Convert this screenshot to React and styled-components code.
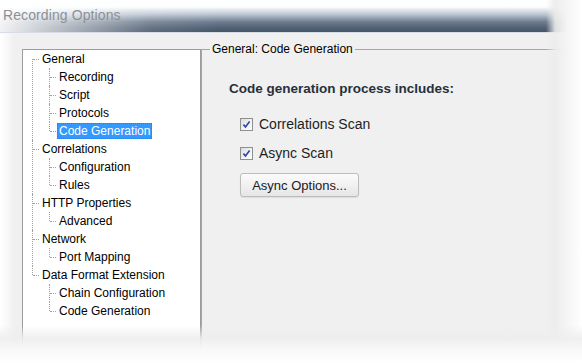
import React from 'react';
import styled, { createGlobalStyle } from 'styled-components';

const GlobalStyle = createGlobalStyle`
  html, body {
    margin: 0;
    padding: 0;
    background: #ffffff;
  }
  body {
    font-family: "Liberation Sans", Arial, sans-serif;
  }
`;

export const Frame = styled.div`
  position: relative;
  width: 582px;
  height: 363px;
  overflow: hidden;
  background: #ffffff;
`;

export const Window = styled.div`
  display: flex;
  flex-direction: column;
  width: 100%;
  height: 100%;
  background-color: #f0f0f0;
`;

export const TitleBar = styled.div`
  position: relative;
  height: 32px;
  flex: none;
  display: flex;
  align-items: center;
  padding-left: 3px;
  border-bottom: 1px solid #d8dde3;
  background: linear-gradient(
    to bottom,
    #ffffff 0%,
    #fbfcfd 22%,
    #bcc6d1 45%,
    #6e7d90 68%,
    #536276 86%,
    #475569 100%
  );

  &::before {
    content: '';
    position: absolute;
    inset: 0;
    background: linear-gradient(
      to right,
      rgba(255, 255, 255, 0.92) 0,
      rgba(255, 255, 255, 0.6) 60px,
      rgba(255, 255, 255, 0.12) 150px,
      rgba(255, 255, 255, 0) 220px
    );
  }
`;

export const Title = styled.span`
  position: relative;
  margin-top: -2px;
  font-size: 14px;
  color: #8c9096;
  letter-spacing: 0.1px;
`;

export const Body = styled.div`
  flex: 1;
  display: flex;
  align-items: flex-start;
  padding: 16px 0 0 22px;
`;

export const TreePanel = styled.div`
  flex: none;
  width: 179px;
  height: 303px;
  background: #ffffff;
  border: 1px solid #9c9c9c;
  padding: 0 0 0 9px;
  box-sizing: border-box;
`;

export const TreeList = styled.ul`
  list-style: none;
  margin: 0;
  padding: 0;
`;

export const Children = styled.ul`
  list-style: none;
  margin: 0;
  padding: 0 0 0 9px;
`;

export const Item = styled.li`
  position: relative;
  padding-left: 8px;

  &::before {
    content: '';
    position: absolute;
    left: 0;
    top: ${(p) => (p.$first ? '9px' : '0')};
    height: ${(p) => (p.$last ? (p.$first ? '0' : '9px') : p.$first ? 'calc(100% - 9px)' : '100%')};
    border-left: 1px dotted #a0a0a0;
  }

  &::after {
    content: '';
    position: absolute;
    left: 1px;
    top: 9px;
    width: 6px;
    border-top: 1px dotted #a0a0a0;
  }
`;

export const Row = styled.div`
  height: 18px;
  display: flex;
  align-items: center;
`;

export const Label = styled.span`
  font-size: 12px;
  line-height: 14px;
  padding: 1px 2px;
  white-space: nowrap;
  color: ${(p) => (p.$selected ? '#ffffff' : '#000000')};
  background: ${(p) => (p.$selected ? '#3399ff' : 'transparent')};
  outline: ${(p) => (p.$selected ? '1px dotted #a0632a' : 'none')};
  outline-offset: -1px;
`;

export const GroupBox = styled.fieldset`
  flex: 1;
  margin: -7px 0 0 0;
  padding: 0;
  height: 320px;
  border: none;
  border-top: 1px solid #a6a6a6;
  border-left: 1px solid #a6a6a6;
  min-width: 0;
`;

export const Legend = styled.legend`
  margin-left: 8px;
  padding: 0 2px;
  font-size: 12px;
  line-height: 14px;
  color: #000000;
`;

export const GroupContent = styled.div`
  display: flex;
  flex-direction: column;
  align-items: flex-start;
  padding: 25px 0 0 27px;
`;

export const Heading = styled.div`
  font-size: 13.5px;
  font-weight: bold;
  line-height: 16px;
  color: #26303c;
  margin-bottom: 18px;
`;

export const CheckRow = styled.label`
  display: flex;
  align-items: center;
  gap: 6px;
  height: 18px;
  margin-left: 11px;
  margin-bottom: ${(p) => p.$gap || '11px'};
  font-size: 14px;
  color: #1e1e1e;
`;

export const Box = styled.span`
  width: 13px;
  height: 13px;
  box-sizing: border-box;
  border: 1px solid #8e8f8f;
  background: linear-gradient(135deg, #dcdcdc 0%, #f4f4f4 60%, #ffffff 100%);
  display: flex;
  align-items: center;
  justify-content: center;
`;

export const Button = styled.button`
  margin-left: 11px;
  width: 119px;
  height: 24px;
  border: 1px solid #bcbcbc;
  border-radius: 3px;
  background: linear-gradient(to bottom, #fbfbfb 0%, #f1f1f1 50%, #e6e6e6 100%);
  box-shadow: 0 1px 1px rgba(0, 0, 0, 0.08);
  font-family: "Liberation Sans", Arial, sans-serif;
  font-size: 13px;
  color: #202020;
  padding: 0;
`;

export const FadeRight = styled.div`
  position: absolute;
  top: 0;
  right: 0;
  width: 36px;
  height: 100%;
  background: linear-gradient(
    to right,
    rgba(240, 240, 240, 0) 0,
    rgba(236, 236, 236, 0.9) 25%,
    rgba(245, 245, 245, 1) 60%,
    #ffffff 100%
  );
`;

export const FadeBottom = styled.div`
  position: absolute;
  left: 0;
  bottom: 0;
  width: 100%;
  height: 38px;
  background: linear-gradient(
    to bottom,
    rgba(240, 240, 240, 0) 0,
    rgba(238, 238, 238, 0.9) 35%,
    rgba(248, 248, 248, 1) 65%,
    #ffffff 100%
  );
`;

export const FadeLeft = styled.div`
  position: absolute;
  left: 0;
  top: 33px;
  width: 14px;
  height: 100%;
  background: linear-gradient(to right, #ffffff 0, rgba(255, 255, 255, 0.6) 50%, rgba(255, 255, 255, 0) 100%);
`;

const tree = [
  { label: 'General', children: ['Recording', 'Script', 'Protocols', 'Code Generation'], selected: 3 },
  { label: 'Correlations', children: ['Configuration', 'Rules'] },
  { label: 'HTTP Properties', children: ['Advanced'] },
  { label: 'Network', children: ['Port Mapping'] },
  { label: 'Data Format Extension', children: ['Chain Configuration', 'Code Generation'] },
];

const Check = () => (
  <Box>
    <svg width="9" height="9" viewBox="0 0 9 9">
      <path d="M1.4 4.6 L3.5 6.9 L7.6 1.6" fill="none" stroke="#2b45a8" strokeWidth="1.6" />
    </svg>
  </Box>
);

const App = () => {
  return (
    <Frame>
      <GlobalStyle />
      <Window>
        <TitleBar>
          <Title>Recording Options</Title>
        </TitleBar>
        <Body>
          <TreePanel>
            <TreeList>
              {tree.map((node, i) => (
                <Item key={node.label} $first={i === 0} $last={i === tree.length - 1}>
                  <Row>
                    <Label>{node.label}</Label>
                  </Row>
                  <Children>
                    {node.children.map((child, j) => (
                      <Item key={child} $last={j === node.children.length - 1}>
                        <Row>
                          <Label $selected={node.selected === j}>{child}</Label>
                        </Row>
                      </Item>
                    ))}
                  </Children>
                </Item>
              ))}
            </TreeList>
          </TreePanel>
          <GroupBox>
            <Legend>General: Code Generation</Legend>
            <GroupContent>
              <Heading>Code generation process includes:</Heading>
              <CheckRow>
                <Check />
                Correlations Scan
              </CheckRow>
              <CheckRow $gap="11px">
                <Check />
                Async Scan
              </CheckRow>
              <Button>Async Options...</Button>
            </GroupContent>
          </GroupBox>
        </Body>
      </Window>
      <FadeLeft />
      <FadeRight />
      <FadeBottom />
    </Frame>
  );
};

export default App;
